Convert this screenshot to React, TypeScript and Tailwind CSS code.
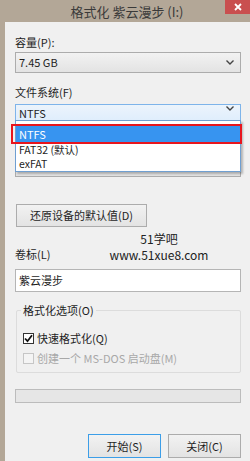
import React from "react";

const font = { fontFamily: '"Noto Sans CJK SC", "Open Sans", sans-serif' };

const Chevron: React.FC = () => (
  <svg width="8" height="5" viewBox="0 0 8 5" className="shrink-0">
    <path d="M0.5 0.5 L4 4 L7.5 0.5" fill="none" stroke="#444" strokeWidth="1.4" />
  </svg>
);

const Check: React.FC = () => (
  <svg width="9" height="9" viewBox="0 0 9 9">
    <path d="M1 4.5 L3.5 7.2 L8 1.2" fill="none" stroke="#111" strokeWidth="1.8" />
  </svg>
);

const App: React.FC = () => {
  return (
    <div className="w-[250px] h-[461px] flex flex-col overflow-hidden bg-[#b3a797] text-[11px] text-[#1e1e1e]" style={font}>
      {/* title bar */}
      <div className="relative h-[22px] shrink-0 flex items-center justify-center">
        <span className="text-[13px] text-[#3a3a3a] ml-[4px] leading-none">格式化 紫云漫步 (I:)</span>
        <div className="absolute right-0 top-0 w-[25px] h-[14px] bg-[#c94f4f] flex items-center justify-center">
          <svg width="8" height="8" viewBox="0 0 8 8">
            <path d="M1 1 L7 7 M7 1 L1 7" stroke="#fff" strokeWidth="1.8" />
          </svg>
        </div>
      </div>

      <div className="flex flex-1">
        <div className="w-[5px] shrink-0" />
        <div className="relative flex-1 bg-[#f0f0f0] pl-[10px] pr-[9px] flex flex-col">
          <div className="mt-[12px] h-[16px] leading-[16px]">容量(P):</div>
          <div className="mt-[2px] h-[21px] border border-[#acacac] bg-gradient-to-b from-[#f2f2f2] to-[#e3e3e3] flex items-center justify-between pl-[3px] pr-[6px]">
            <span>7.45 GB</span>
            <Chevron />
          </div>

          <div className="mt-[11px] h-[16px] leading-[16px]">文件系统(F)</div>
          <div className="relative mt-[4px] h-[21px]">
            <div className="h-full border border-[#7eb4ea] bg-gradient-to-b from-[#ecf4fc] to-[#dcecfc] flex items-start justify-between pl-[3px] pr-[6px] pt-[1px]">
              <span className="leading-[14px]">NTFS</span>
              <Chevron />
            </div>
            {/* open list */}
            <div className="absolute left-0 top-[16px] w-[226px] h-[52px] bg-white border border-[#6f9fd1] shadow-[2px_2px_2px_rgba(0,0,0,0.25)] z-10 flex flex-col pt-[4px] text-[10.5px]">
              <div className="relative h-[18px] shrink-0 bg-[#3794f0] text-white pl-[3px] leading-[18px] text-[11px]">
                NTFS
                <div className="absolute -left-[5px] -top-[1px] w-[231px] h-[20px] border-2 border-[#e8151d]" />
              </div>
              <div className="h-[14px] shrink-0 leading-[14px] pl-[3px]">FAT32 (默认)</div>
              <div className="h-[14px] shrink-0 leading-[14px] pl-[3px]">exFAT</div>
            </div>
          </div>

          {/* allocation unit row, covered by the open list */}
          <div className="mt-[9px] h-[16px]" />
          <div className="mt-[6px] h-[21px] border border-[#acacac] bg-gradient-to-b from-[#f2f2f2] to-[#e3e3e3] flex items-center justify-end pr-[6px]">
            <Chevron />
          </div>

          <div className="mt-[27px] ml-[1px] w-[131px] h-[23px] border border-[#acacac] bg-gradient-to-b from-[#f2f2f2] to-[#e3e3e3] flex items-center justify-center">
            还原设备的默认值(D)
          </div>

          <div className="mt-[19px] h-[16px] leading-[16px]">卷标(L)</div>
          <div className="mt-[7px] h-[23px] border border-[#b5b5b5] bg-white flex items-center pl-[3px]">紫云漫步</div>

          <div className="relative mt-[18px] ml-[1px] h-[63px] border border-[#dcdcdc] rounded-[2px] pl-[6px]">
            <span className="absolute left-[4px] -top-[9px] bg-[#f0f0f0] px-[2px] leading-[16px]">格式化选项(O)</span>
            <div className="mt-[20px] flex items-center h-[14px]">
              <div className="w-[11px] h-[11px] border border-[#333] bg-white flex items-center justify-center">
                <Check />
              </div>
              <span className="ml-[3px]">快速格式化(Q)</span>
            </div>
            <div className="mt-[6px] flex items-center h-[14px] text-[#a8a8a8]">
              <div className="w-[11px] h-[11px] border border-[#c6c6c6] bg-[#f4f4f4]" />
              <span className="ml-[3px]">创建一个 MS-DOS 启动盘(M)</span>
            </div>
          </div>

          <div className="mt-[16px] h-[14px] border border-[#bcbcbc] bg-[#e6e6e6]" />

          <div className="mt-[31px] flex justify-end gap-[7px]">
            <div className="w-[73px] h-[24px] border border-[#3c9ee8] bg-gradient-to-b from-[#f2f2f2] to-[#e3e3e3] flex items-center justify-center">
              开始(S)
            </div>
            <div className="w-[73px] h-[24px] border border-[#acacac] bg-gradient-to-b from-[#f2f2f2] to-[#e3e3e3] flex items-center justify-center">
              关闭(C)
            </div>
          </div>

          {/* watermark */}
          <div className="absolute left-[97px] top-[209px] w-[114px] flex flex-col items-center text-[12px] leading-[16px] text-[#222]">
            <span>51学吧</span>
            <span>www.51xue8.com</span>
          </div>
        </div>
      </div>
    </div>
  );
};

export default App;
